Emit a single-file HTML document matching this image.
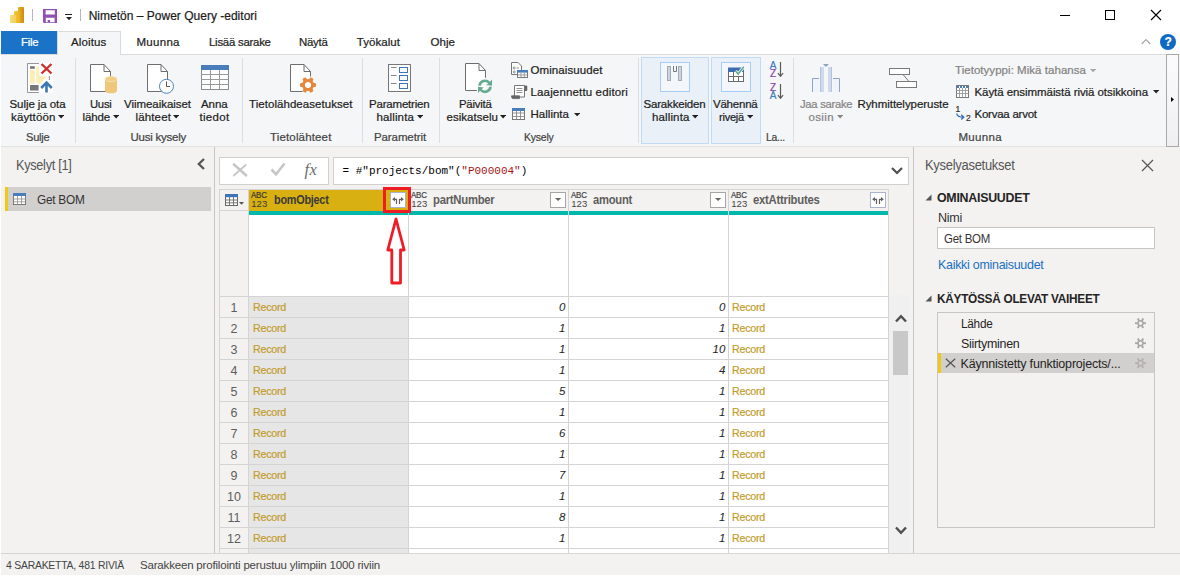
<!DOCTYPE html>
<html lang="fi"><head><meta charset="utf-8"><title>Power Query -editori</title>
<style>
html,body{margin:0;padding:0;}
body{width:1180px;height:576px;position:relative;overflow:hidden;background:#fff;font-family:"Liberation Sans",sans-serif;}
.a{position:absolute;box-sizing:border-box;display:block;}
.t{position:absolute;white-space:nowrap;}
.h{-webkit-text-stroke:0.22px currentColor;}
</style></head><body>
<div class="a" style="left:1px;top:31px;width:56px;height:23px;background:#1a73c7;"></div>
<div class="a" style="left:0px;top:54px;width:1180px;height:1px;background:#dadbdc;"></div>
<div class="a" style="left:57px;top:31px;width:64px;height:24px;background:#f5f6f7;border:1px solid #dadbdc;border-bottom:none;"></div>
<div class="a" style="left:0px;top:55px;width:1180px;height:91px;background:#f5f6f7;"></div>
<div class="a" style="left:0px;top:146px;width:1180px;height:1px;background:#e1e1e1;"></div>
<div class="a" style="left:0px;top:147px;width:1180px;height:406px;background:#f3f2f1;"></div>
<div class="a" style="left:0px;top:553px;width:1180px;height:1px;background:#d6d6d6;"></div>
<div class="a" style="left:0px;top:554px;width:1180px;height:21px;background:#f3f2f1;"></div>
<div class="a" style="left:0px;top:31px;width:1px;height:545px;background:#fff;"></div>
<div class="a" style="left:0px;top:575px;width:1180px;height:1px;background:#fff;"></div>
<svg class="a" style="left:10px;top:7px" width="14" height="16" viewBox="0 0 14 16"><defs><linearGradient id="g1" x1="0" x2="1"><stop offset="0" stop-color="#f7df7c"/><stop offset="1" stop-color="#f3cf58"/></linearGradient>
<linearGradient id="g2" x1="0" x2="1"><stop offset="0" stop-color="#f3c93c"/><stop offset="1" stop-color="#eab022"/></linearGradient>
<linearGradient id="g3" x1="0" x2="1"><stop offset="0" stop-color="#eab424"/><stop offset="1" stop-color="#cf8a0e"/></linearGradient></defs>
<rect x="8" y="0" width="6" height="16" rx="0.7" fill="url(#g3)"/>
<rect x="4" y="4" width="6" height="12" rx="0.7" fill="url(#g2)"/>
<rect x="0" y="8" width="6" height="8" rx="0.7" fill="url(#g1)"/></svg>
<div class="a" style="left:32px;top:9px;width:1px;height:12px;background:#b5b5b5;"></div>
<svg class="a" style="left:43px;top:9px" width="14" height="14" viewBox="0 0 14 14"><path d="M0 0H14V14H1L0 13Z M2.6 1.3V5.5H11.8V1.3Z M2.8 8.7V13.2H11.6V8.7Z" fill="#9350b3" fill-rule="evenodd"/><rect x="4.7" y="11" width="2.4" height="2.4" fill="#9350b3"/></svg>
<div class="a" style="left:65px;top:14px;width:7px;height:1px;background:#222;"></div>
<svg class="a" style="left:65.7px;top:16.8px" width="6.0" height="3.1999999999999993" viewBox="0 0 6.0 3.1999999999999993"><path d="M0 0H6.0L3.0 3.1999999999999993Z" fill="#222"/></svg>
<div class="a" style="left:80px;top:9px;width:1px;height:12px;background:#b5b5b5;"></div>
<span class="t h" style="top:7.64px;font-size:12px;line-height:16px;color:#1b1b1b;letter-spacing:0.008px;left:88.70px;">Nimetön – Power Query -editori</span>
<div class="a" style="left:1060px;top:15px;width:10px;height:1px;background:#000;"></div>
<div class="a" style="left:1105px;top:10px;width:10px;height:10px;border:1px solid #000;"></div>
<svg class="a" style="left:1150px;top:9px" width="12" height="12" viewBox="0 0 12 12"><path d="M1 1L11 11M11 1L1 11" stroke="#000" stroke-width="1.1" fill="none"/></svg>
<svg class="a" style="left:1141px;top:38px" width="10" height="7" viewBox="0 0 10 7"><path d="M0.7 6L5 1.7L9.3 6" stroke="#a6a6a6" stroke-width="1.2" fill="none"/></svg>
<div class="a" style="left:1160px;top:34px;width:16px;height:16px;background:#1169c4;border-radius:8px;"></div>
<span class="t h" style="top:34.44px;font-size:12px;line-height:16px;color:#fff;font-weight:700;left:1164.50px;">?</span>
<span class="t h" style="top:35.42px;font-size:11.5px;line-height:15px;color:#fff;letter-spacing:-0.253px;transform:scaleX(0.9875);transform-origin:0 50%;left:20.60px;">File</span>
<span class="t h" style="top:35.42px;font-size:11.5px;line-height:15px;color:#1e1e1e;letter-spacing:0.140px;left:71.00px;">Aloitus</span>
<span class="t h" style="top:35.42px;font-size:11.5px;line-height:15px;color:#1e1e1e;letter-spacing:0.290px;left:136.50px;">Muunna</span>
<span class="t h" style="top:35.42px;font-size:11.5px;line-height:15px;color:#1e1e1e;letter-spacing:-0.253px;transform:scaleX(0.9925);transform-origin:0 50%;left:209.00px;">Lisää sarake</span>
<span class="t h" style="top:35.42px;font-size:11.5px;line-height:15px;color:#1e1e1e;letter-spacing:-0.253px;transform:scaleX(0.9939);transform-origin:0 50%;left:299.40px;">Näytä</span>
<span class="t h" style="top:35.42px;font-size:11.5px;line-height:15px;color:#1e1e1e;letter-spacing:0.059px;left:356.70px;">Työkalut</span>
<span class="t h" style="top:35.42px;font-size:11.5px;line-height:15px;color:#1e1e1e;letter-spacing:0.052px;left:430.50px;">Ohje</span>
<div class="a" style="left:75px;top:58px;width:1px;height:85px;background:#dddedf;"></div>
<div class="a" style="left:242px;top:58px;width:1px;height:85px;background:#dddedf;"></div>
<div class="a" style="left:362px;top:58px;width:1px;height:85px;background:#dddedf;"></div>
<div class="a" style="left:439px;top:58px;width:1px;height:85px;background:#dddedf;"></div>
<div class="a" style="left:638px;top:58px;width:1px;height:85px;background:#dddedf;"></div>
<div class="a" style="left:793px;top:58px;width:1px;height:85px;background:#dddedf;"></div>
<div class="a" style="left:641px;top:57px;width:68px;height:87px;background:#e9f0f8;border:1px solid #c2dbf5;"></div>
<div class="a" style="left:660px;top:62px;width:30px;height:30px;background:#f3f7fb;border:1px solid #a8cdf5;"></div>
<div class="a" style="left:711px;top:57px;width:50px;height:87px;background:#e9f0f8;border:1px solid #c2dbf5;"></div>
<div class="a" style="left:721px;top:62px;width:30px;height:30px;background:#f3f7fb;border:1px solid #a8cdf5;"></div>
<div class="a" style="left:1166px;top:54px;width:13px;height:93px;background:linear-gradient(#fbfbfb,#efefef);border:1px solid #a9a9a9;"></div>
<svg class="a" style="left:1171px;top:97px" width="3" height="5" viewBox="0 0 3 5"><path d="M0 0L3 2.5L0 5Z" fill="#000"/></svg>
<span class="t h" style="top:97.12px;font-size:11.5px;line-height:15px;color:#1e1e1e;letter-spacing:-0.075px;left:9.50px;">Sulje ja ota</span>
<span class="t h" style="top:109.72px;font-size:11.5px;line-height:15px;color:#1e1e1e;letter-spacing:0.128px;left:11.00px;">käyttöön</span>
<svg class="a" style="left:58.2px;top:115.2px" width="6.299999999999997" height="3.3999999999999915" viewBox="0 0 6.299999999999997 3.3999999999999915"><path d="M0 0H6.299999999999997L3.1499999999999986 3.3999999999999915Z" fill="#1e1e1e"/></svg>
<span class="t h" style="top:97.12px;font-size:11.5px;line-height:15px;color:#1e1e1e;letter-spacing:-0.253px;transform:scaleX(0.9776);transform-origin:0 50%;left:89.50px;">Uusi</span>
<span class="t h" style="top:109.72px;font-size:11.5px;line-height:15px;color:#1e1e1e;letter-spacing:-0.128px;left:82.50px;">lähde</span>
<svg class="a" style="left:113.2px;top:115.2px" width="6.299999999999997" height="3.3999999999999915" viewBox="0 0 6.299999999999997 3.3999999999999915"><path d="M0 0H6.299999999999997L3.1499999999999986 3.3999999999999915Z" fill="#1e1e1e"/></svg>
<span class="t h" style="top:97.12px;font-size:11.5px;line-height:15px;color:#1e1e1e;letter-spacing:-0.042px;left:124.00px;">Viimeaikaiset</span>
<span class="t h" style="top:109.72px;font-size:11.5px;line-height:15px;color:#1e1e1e;letter-spacing:0.139px;left:135.50px;">lähteet</span>
<svg class="a" style="left:173.2px;top:115.2px" width="6.300000000000011" height="3.3999999999999915" viewBox="0 0 6.300000000000011 3.3999999999999915"><path d="M0 0H6.300000000000011L3.1500000000000057 3.3999999999999915Z" fill="#1e1e1e"/></svg>
<span class="t h" style="top:97.12px;font-size:11.5px;line-height:15px;color:#1e1e1e;letter-spacing:-0.089px;left:201.00px;">Anna</span>
<span class="t h" style="top:109.72px;font-size:11.5px;line-height:15px;color:#1e1e1e;letter-spacing:0.311px;left:199.50px;">tiedot</span>
<span class="t h" style="top:97.12px;font-size:11.5px;line-height:15px;color:#1e1e1e;letter-spacing:0.053px;left:249.00px;">Tietolähdeasetukset</span>
<span class="t h" style="top:97.12px;font-size:11.5px;line-height:15px;color:#1e1e1e;letter-spacing:-0.194px;left:369.00px;">Parametrien</span>
<span class="t h" style="top:109.72px;font-size:11.5px;line-height:15px;color:#1e1e1e;letter-spacing:0.132px;left:376.50px;">hallinta</span>
<svg class="a" style="left:417.2px;top:115.2px" width="6.300000000000011" height="3.3999999999999915" viewBox="0 0 6.300000000000011 3.3999999999999915"><path d="M0 0H6.300000000000011L3.1500000000000057 3.3999999999999915Z" fill="#1e1e1e"/></svg>
<span class="t h" style="top:97.12px;font-size:11.5px;line-height:15px;color:#1e1e1e;letter-spacing:-0.253px;transform:scaleX(0.9925);transform-origin:0 50%;left:459.00px;">Päivitä</span>
<span class="t h" style="top:109.72px;font-size:11.5px;line-height:15px;color:#1e1e1e;letter-spacing:0.036px;left:446.50px;">esikatselu</span>
<svg class="a" style="left:499.7px;top:115.2px" width="6.300000000000011" height="3.3999999999999915" viewBox="0 0 6.300000000000011 3.3999999999999915"><path d="M0 0H6.300000000000011L3.1500000000000057 3.3999999999999915Z" fill="#1e1e1e"/></svg>
<span class="t h" style="top:97.12px;font-size:11.5px;line-height:15px;color:#1e1e1e;letter-spacing:-0.175px;left:643.50px;">Sarakkeiden</span>
<span class="t h" style="top:109.72px;font-size:11.5px;line-height:15px;color:#1e1e1e;letter-spacing:0.132px;left:652.00px;">hallinta</span>
<svg class="a" style="left:692.2px;top:115.2px" width="6.2999999999999545" height="3.3999999999999915" viewBox="0 0 6.2999999999999545 3.3999999999999915"><path d="M0 0H6.2999999999999545L3.1499999999999773 3.3999999999999915Z" fill="#1e1e1e"/></svg>
<span class="t h" style="top:97.12px;font-size:11.5px;line-height:15px;color:#1e1e1e;letter-spacing:-0.221px;left:713.00px;">Vähennä</span>
<span class="t h" style="top:109.72px;font-size:11.5px;line-height:15px;color:#1e1e1e;letter-spacing:-0.253px;transform:scaleX(0.9629);transform-origin:0 50%;left:719.00px;">rivejä</span>
<svg class="a" style="left:747.2px;top:115.2px" width="6.2999999999999545" height="3.3999999999999915" viewBox="0 0 6.2999999999999545 3.3999999999999915"><path d="M0 0H6.2999999999999545L3.1499999999999773 3.3999999999999915Z" fill="#1e1e1e"/></svg>
<span class="t h" style="top:97.12px;font-size:11.5px;line-height:15px;color:#858585;letter-spacing:-0.253px;transform:scaleX(0.9735);transform-origin:0 50%;left:799.70px;">Jaa sarake</span>
<span class="t h" style="top:109.72px;font-size:11.5px;line-height:15px;color:#858585;letter-spacing:0.370px;left:808.40px;">osiin</span>
<svg class="a" style="left:836.7px;top:115.2px" width="6.2999999999999545" height="3.3999999999999915" viewBox="0 0 6.2999999999999545 3.3999999999999915"><path d="M0 0H6.2999999999999545L3.1499999999999773 3.3999999999999915Z" fill="#858585"/></svg>
<span class="t h" style="top:97.12px;font-size:11.5px;line-height:15px;color:#1e1e1e;letter-spacing:-0.049px;left:857.40px;">Ryhmittelyperuste</span>
<span class="t h" style="top:130.22px;font-size:11.5px;line-height:15px;color:#444;letter-spacing:-0.253px;transform:scaleX(0.9668);transform-origin:0 50%;left:26.00px;">Sulje</span>
<span class="t h" style="top:130.22px;font-size:11.5px;line-height:15px;color:#444;letter-spacing:-0.241px;left:130.50px;">Uusi kysely</span>
<span class="t h" style="top:130.22px;font-size:11.5px;line-height:15px;color:#444;letter-spacing:0.153px;left:270.00px;">Tietolähteet</span>
<span class="t h" style="top:130.22px;font-size:11.5px;line-height:15px;color:#444;letter-spacing:-0.104px;left:374.00px;">Parametrit</span>
<span class="t h" style="top:130.22px;font-size:11.5px;line-height:15px;color:#444;letter-spacing:-0.253px;transform:scaleX(0.9118);transform-origin:0 50%;left:523.50px;">Kysely</span>
<span class="t h" style="top:130.22px;font-size:11.5px;line-height:15px;color:#444;letter-spacing:-0.253px;transform:scaleX(0.9000);transform-origin:0 50%;left:766.00px;">La...</span>
<span class="t h" style="top:130.22px;font-size:11.5px;line-height:15px;color:#444;letter-spacing:0.340px;left:958.40px;">Muunna</span>
<span class="t h" style="top:62.72px;font-size:11.5px;line-height:15px;color:#1e1e1e;letter-spacing:0.087px;left:530.50px;">Ominaisuudet</span>
<span class="t h" style="top:84.72px;font-size:11.5px;line-height:15px;color:#1e1e1e;letter-spacing:0.151px;left:530.50px;">Laajennettu editori</span>
<span class="t h" style="top:106.72px;font-size:11.5px;line-height:15px;color:#1e1e1e;letter-spacing:0.018px;left:530.50px;">Hallinta</span>
<svg class="a" style="left:573.8px;top:113px" width="6.2000000000000455" height="3.4000000000000057" viewBox="0 0 6.2000000000000455 3.4000000000000057"><path d="M0 0H6.2000000000000455L3.1000000000000227 3.4000000000000057Z" fill="#252423"/></svg>
<span class="t h" style="top:62.72px;font-size:11.5px;line-height:15px;color:#838383;letter-spacing:0.041px;left:955.00px;">Tietotyyppi: Mikä tahansa</span>
<svg class="a" style="left:1089.8px;top:68.8px" width="6.2000000000000455" height="3.4000000000000057" viewBox="0 0 6.2000000000000455 3.4000000000000057"><path d="M0 0H6.2000000000000455L3.1000000000000227 3.4000000000000057Z" fill="#a8a8a8"/></svg>
<span class="t h" style="top:84.72px;font-size:11.5px;line-height:15px;color:#1e1e1e;letter-spacing:-0.067px;left:974.50px;">Käytä ensimmäistä riviä otsikkoina</span>
<svg class="a" style="left:1152.5px;top:90.2px" width="6.2999999999999545" height="3.3999999999999915" viewBox="0 0 6.2999999999999545 3.3999999999999915"><path d="M0 0H6.2999999999999545L3.1499999999999773 3.3999999999999915Z" fill="#252423"/></svg>
<span class="t h" style="top:106.82px;font-size:11.5px;line-height:15px;color:#1e1e1e;letter-spacing:-0.242px;left:974.50px;">Korvaa arvot</span>
<svg class="a" style="left:27px;top:63px" width="26" height="30" viewBox="0 0 26 30"><path d="M19 0.5H0.5V29.5H12" fill="#fff" stroke="#8a8a8a"/>
<rect x="0.5" y="0.5" width="12" height="29" fill="#fff" stroke="none"/>
<path d="M12 0.5H0.5V29.5H12" fill="none" stroke="#989898"/>
<rect x="12" y="0" width="14" height="30" fill="#fff"/>
<rect x="3" y="3.2" width="4.8" height="2.6" fill="#777"/>
<rect x="3" y="7" width="4.7" height="13.5" fill="#fdeeb5"/>
<path d="M9.3 3.2H12V11.5L14 13.5H20L13.5 20.5H9.3Z" fill="#fdeeb5"/>
<rect x="3" y="22" width="8.6" height="5.5" fill="#777"/>
<path d="M14.5 1L24.5 10.5M24.5 1L14.5 10.5" stroke="#c9302c" stroke-width="2.4" fill="none"/>
<path d="M22.3 13V17" stroke="#8a8a8a" stroke-width="1"/>
<path d="M19.5 29.5V20.5M14.2 25L19.5 19.7L24.8 25" stroke="#3b78b5" stroke-width="2.6" fill="none"/></svg>
<svg class="a" style="left:90px;top:64px" width="28" height="30" viewBox="0 0 28 30"><path d="M0.5 0.5H14L20.5 7.5V27.5H0.5Z" fill="#fff" stroke="#6e6e6e" stroke-width="1"/><path d="M14 0.5V7.5H20.5" fill="none" stroke="#6e6e6e" stroke-width="1"/><path d="M15 15V26.5C15 30.3 27 30.3 27 26.5V15Z" fill="#eec77a"/>
<ellipse cx="21" cy="15" rx="6" ry="2.6" fill="#f0cd85" stroke="#f7e3b8" stroke-width="0.8"/></svg>
<svg class="a" style="left:147px;top:64px" width="28" height="30" viewBox="0 0 28 30"><path d="M0.5 0.5H14L20.5 7.5V27.5H0.5Z" fill="#fff" stroke="#6e6e6e" stroke-width="1"/><path d="M14 0.5V7.5H20.5" fill="none" stroke="#6e6e6e" stroke-width="1"/><circle cx="19.5" cy="22.3" r="7" fill="#fff" stroke="#4a86c5" stroke-width="1"/>
<path d="M19.5 17.5V22.5H23" fill="none" stroke="#555" stroke-width="1"/></svg>
<svg class="a" style="left:201px;top:65px" width="28" height="25" viewBox="0 0 28 25"><rect x="0.5" y="0.5" width="27" height="24" fill="#fff" stroke="#8c8c8c"/>
<rect x="0" y="0" width="28" height="5" fill="#4a7ebb"/>
<path d="M9.5 5V24M18.5 5V24M0 9.5H28M0 14.5H28M0 19.5H28" stroke="#9a9a9a" stroke-width="1" fill="none"/></svg>
<svg class="a" style="left:290px;top:64px" width="28" height="30" viewBox="0 0 28 30"><path d="M0.5 0.5H14L20.5 7.5V27.5H0.5Z" fill="#fff"/><path d="M12.5 27.5H0.5V0.5H14L20.5 7.5V12.5M14 0.5V7.5H20.5" fill="none" stroke="#6e6e6e"/><g transform="translate(18,21)"><g fill="#e8873a"><rect x="-1.9" y="-8" width="3.8" height="5" rx="0.8" transform="rotate(30)"/><rect x="-1.9" y="-8" width="3.8" height="5" rx="0.8" transform="rotate(90)"/><rect x="-1.9" y="-8" width="3.8" height="5" rx="0.8" transform="rotate(150)"/><rect x="-1.9" y="-8" width="3.8" height="5" rx="0.8" transform="rotate(210)"/><rect x="-1.9" y="-8" width="3.8" height="5" rx="0.8" transform="rotate(270)"/><rect x="-1.9" y="-8" width="3.8" height="5" rx="0.8" transform="rotate(330)"/></g><circle r="4.6" fill="none" stroke="#e8873a" stroke-width="3"/><circle r="2.6" fill="#fff"/></g></svg>
<svg class="a" style="left:388px;top:64px" width="23" height="28" viewBox="0 0 23 28"><rect x="0.5" y="0.5" width="22" height="27" fill="#fff" stroke="#777"/>
<path d="M3 3.5H8.5M3 11.5H8.5M3 19.5H8.5" stroke="#8a8a8a" stroke-width="1"/>
<rect x="11.5" y="3.5" width="8" height="5" fill="#fff" stroke="#3b78b5"/>
<rect x="11.5" y="11.5" width="8" height="5" fill="#fff" stroke="#3b78b5"/>
<rect x="11.5" y="19.5" width="8" height="5" fill="#fff" stroke="#3b78b5"/></svg>
<svg class="a" style="left:465px;top:63px" width="29" height="31" viewBox="0 0 29 31"><path d="M0.5 0.5H14L20.5 7.5V27.5H0.5Z" fill="#fff"/><path d="M11.8 27.5H0.5V0.5H14L20.5 7.5V14.8M14 0.5V7.5H20.5" fill="none" stroke="#6e6e6e"/>
<path id="rf" d="M13.2 22.8A6.8 6.8 0 0 1 25.05 18.75L27 16.5V22.8L21 22L23.31 20.71A4.2 4.2 0 0 0 15.83 22.8Z" fill="#66a98f"/>
<use href="#rf" transform="rotate(180 20 23.3)"/></svg>
<svg class="a" style="left:511px;top:62px" width="17" height="16" viewBox="0 0 17 16"><path d="M0.5 0.5H7L10.5 4V12.5H0.5Z" fill="#fff" stroke="#777"/>
<circle cx="3.2" cy="6" r="1" fill="none" stroke="#777" stroke-width="0.8"/><circle cx="3.2" cy="10" r="1" fill="none" stroke="#777" stroke-width="0.8"/>
<path d="M5.5 6H8" stroke="#777" stroke-width="0.8"/>
<rect x="6.5" y="8.5" width="10" height="7" fill="#fff" stroke="#777"/>
<rect x="6" y="8" width="11" height="2.6" fill="#4a7ebb"/>
<path d="M10 10.5V15.5M13.3 10.5V15.5M6.5 13H16.5" stroke="#888" stroke-width="0.8"/></svg>
<svg class="a" style="left:511px;top:85px" width="17" height="15" viewBox="0 0 17 15"><path d="M3.5 0.5H13.5V12H3.5Z" fill="#fff" stroke="#777"/>
<path d="M13.5 1H15.8V5.5H13.5" fill="#666" stroke="#555" stroke-width="0.8"/>
<path d="M5.5 3.5H11.5M5.5 5.5H11.5M5.5 7.5H11.5" stroke="#888" stroke-width="0.9"/>
<path d="M0.5 10.8H8.5V13.6H2C1 13.6 0.5 12.7 0.5 10.8Z" fill="#666" stroke="#666" stroke-width="0.8"/></svg>
<svg class="a" style="left:512px;top:108px" width="13" height="12" viewBox="0 0 13 12"><rect x="0.5" y="0.5" width="12" height="11" fill="#fff" stroke="#777"/>
<rect x="0" y="0" width="13" height="3" fill="#4a7ebb"/>
<path d="M4.5 3V11.5M8.5 3V11.5M0.5 5H12.5M0.5 8.5H12.5" stroke="#888" stroke-width="0.9"/></svg>
<svg class="a" style="left:667px;top:66px" width="16" height="15" viewBox="0 0 16 15"><rect x="0.5" y="0.5" width="3" height="14" fill="#c5d6ea" stroke="#a9a9a9"/>
<rect x="11.5" y="0.5" width="3" height="14" fill="#c5d6ea" stroke="#a9a9a9"/>
<path d="M6.5 0V5.5H9.5V0" fill="none" stroke="#777" stroke-width="1"/></svg>
<svg class="a" style="left:728px;top:66px" width="17" height="16" viewBox="0 0 17 16"><rect x="0.5" y="5.5" width="15" height="10" fill="#fff" stroke="#6a6a6a"/>
<rect x="0" y="1.5" width="16" height="4.5" fill="#3d6db0"/>
<path d="M5.5 6V15.5M10.5 6V15.5M0.5 10.5H15.5" stroke="#6a6a6a" stroke-width="1"/>
<path d="M7.5 5L10.2 8L15.8 0.8" fill="none" stroke="#fff" stroke-width="3"/>
<path d="M7.5 5L10.2 8L15.8 0.8" fill="none" stroke="#5fa88a" stroke-width="1.5"/></svg>
<span class="t h" style="top:58.83px;font-size:10px;line-height:13px;color:#3f7cc0;left:769.70px;">A</span>
<span class="t h" style="top:67.03px;font-size:10px;line-height:13px;color:#8a45aa;left:770.00px;">Z</span>
<svg class="a" style="left:777px;top:62px" width="7" height="15" viewBox="0 0 7 15"><path d="M3.5 0V14.3M0.9 11.2L3.5 14.3L6.1 11.2" fill="none" stroke="#5a5a5a" stroke-width="1.2"/></svg>
<span class="t h" style="top:80.94px;font-size:10px;line-height:13px;color:#8a45aa;left:770.00px;">Z</span>
<span class="t h" style="top:88.94px;font-size:10px;line-height:13px;color:#3f7cc0;left:769.70px;">A</span>
<svg class="a" style="left:777px;top:84px" width="7" height="15" viewBox="0 0 7 15"><path d="M3.5 0V14.3M0.9 11.2L3.5 14.3L6.1 11.2" fill="none" stroke="#5a5a5a" stroke-width="1.2"/></svg>
<svg class="a" style="left:812px;top:64px" width="28" height="28" viewBox="0 0 28 28"><path d="M10.9 0.1H17L13.95 2.9Z" fill="#8fa3c0"/>
<rect x="8" y="3" width="4" height="25" fill="#cfdbec"/><path d="M8.5 3V28" stroke="#b3c3db"/>
<rect x="16" y="3" width="4" height="25" fill="#cfdbec"/><path d="M19.5 3V28" stroke="#b3c3db"/>
<rect x="0" y="14" width="7" height="14" fill="#eef3fc"/><path d="M0.5 28V14.5H7" fill="none" stroke="#8fa4c4"/>
<rect x="21" y="14" width="7" height="14" fill="#eef3fc"/><path d="M21 14.5H27.5V28" fill="none" stroke="#8fa4c4"/></svg>
<svg class="a" style="left:889px;top:68px" width="29" height="20" viewBox="0 0 29 20"><rect x="0.5" y="0.5" width="20" height="6" fill="#fff" stroke="#7a7a7a"/>
<rect x="7.5" y="13.5" width="20" height="6" fill="#fff" stroke="#7a7a7a"/>
<path d="M14 6.5L20 13.5" stroke="#7a7a7a" stroke-width="1"/></svg>
<svg class="a" style="left:956px;top:85px" width="13" height="13" viewBox="0 0 13 13"><rect x="0.5" y="0.5" width="12" height="12" fill="#fff" stroke="#777"/>
<path d="M1 2H12" stroke="#4a7ebb" stroke-width="2" stroke-dasharray="2 1"/>
<path d="M3.5 3V12.5M6.5 3V12.5M9.5 3V12.5M0.5 5.5H12.5M0.5 8.5H12.5" stroke="#999" stroke-width="0.9"/></svg>
<span class="t h" style="top:104.35px;font-size:8.5px;line-height:11px;color:#333;left:955.50px;">1</span>
<span class="t h" style="top:113.15px;font-size:8.5px;line-height:11px;color:#333;left:966.00px;">2</span>
<svg class="a" style="left:956px;top:113px" width="9" height="7" viewBox="0 0 9 7"><path d="M0.7 0.5C1 3.5 3.5 4.2 7.5 4.2M5.2 1.8L7.8 4.2L5.2 6.5" fill="none" stroke="#2f6fbf" stroke-width="1.3"/></svg>
<div class="a" style="left:214px;top:147px;width:1px;height:406px;background:#c8c6c4;"></div>
<span class="t" style="top:156.35px;font-size:14px;line-height:18px;color:#555;letter-spacing:-0.308px;transform:scaleX(0.9070);transform-origin:0 50%;left:16.00px;">Kyselyt [1]</span>
<svg class="a" style="left:197.3px;top:158.3px" width="8" height="12" viewBox="0 0 8 12"><path d="M7 1L1.8 6L7 11" fill="none" stroke="#555" stroke-width="2.3"/></svg>
<div class="a" style="left:5px;top:187px;width:206px;height:24px;background:#d2d0ce;"></div>
<div class="a" style="left:5px;top:187px;width:2.5px;height:24px;background:#f2c811;"></div>
<svg class="a" style="left:13px;top:193px" width="13" height="12" viewBox="0 0 13 12"><rect x="0.5" y="0.5" width="12" height="11" fill="#fff" stroke="#777"/>
<rect x="0" y="0" width="13" height="3" fill="#4a7ebb"/>
<path d="M4.5 3V11.5M8.5 3V11.5M0.5 6H12.5M0.5 8.8H12.5" stroke="#999" stroke-width="0.9"/></svg>
<span class="t" style="top:191.00px;font-size:13px;line-height:17px;color:#333;letter-spacing:-0.286px;transform:scaleX(0.9104);transform-origin:0 50%;left:36.50px;">Get BOM</span>
<div class="a" style="left:219px;top:157px;width:110px;height:28px;background:#fff;border:1px solid #d2d0ce;"></div>
<div class="a" style="left:333px;top:157px;width:576px;height:28px;background:#fff;border:1px solid #d2d0ce;"></div>
<svg class="a" style="left:232px;top:163px" width="16" height="14" viewBox="0 0 16 14"><path d="M1.2 0.8L14.8 13" stroke="#c6c6c6" stroke-width="2.6" fill="none"/><path d="M14.2 1.5L1.2 13" stroke="#c6c6c6" stroke-width="1.7" fill="none"/></svg>
<svg class="a" style="left:270px;top:162px" width="16" height="14" viewBox="0 0 16 14"><path d="M1.5 7.5L6 12.3L14.5 1.5" stroke="#c6c6c6" stroke-width="2.6" fill="none"/></svg>
<span class="t" style="top:159.38px;font-size:16.5px;line-height:21px;color:#6a6a6a;font-style:italic;font-family:'Liberation Serif', serif;letter-spacing:0.296px;left:304.50px;">fx</span>
<span class="t" style="top:164.19px;font-size:11px;line-height:14px;color:#000;font-family:'Liberation Mono', monospace;letter-spacing:-0.001px;left:342.50px;">= #&quot;projects/bom&quot;(<span style="color:#a31515">&quot;P000004&quot;</span>)</span>
<svg class="a" style="left:891px;top:167px" width="12" height="8" viewBox="0 0 12 8"><path d="M1 1L6 6L11 1" fill="none" stroke="#4f4f4f" stroke-width="2.2"/></svg>
<div class="a" style="left:219px;top:189px;width:670px;height:364px;background:#fff;"></div>
<div class="a" style="left:219px;top:189px;width:30px;height:364px;background:#f3f2f1;"></div>
<div class="a" style="left:219px;top:189px;width:670px;height:22px;background:#f3f2f1;"></div>
<div class="a" style="left:249px;top:190px;width:160px;height:21px;background:#d8b012;"></div>
<div class="a" style="left:249px;top:296px;width:160px;height:257px;background:#e6e6e6;"></div>
<div class="a" style="left:249px;top:211px;width:640px;height:4px;background:#01b8aa;"></div>
<div class="a" style="left:219px;top:189px;width:670px;height:1px;background:#d4d4d4;"></div>
<div class="a" style="left:219px;top:189px;width:1px;height:364px;background:#d4d4d4;"></div>
<div class="a" style="left:248px;top:189px;width:1px;height:364px;background:#d4d4d4;"></div>
<div class="a" style="left:408px;top:189px;width:1px;height:364px;background:#d4d4d4;"></div>
<div class="a" style="left:568px;top:189px;width:1px;height:364px;background:#d4d4d4;"></div>
<div class="a" style="left:728px;top:189px;width:1px;height:364px;background:#d4d4d4;"></div>
<div class="a" style="left:888px;top:189px;width:1px;height:364px;background:#d4d4d4;"></div>
<div class="a" style="left:219px;top:210px;width:30px;height:1px;background:#d4d4d4;"></div>
<div class="a" style="left:219px;top:296px;width:670px;height:1px;background:#d4d4d4;"></div>
<div class="a" style="left:219px;top:317px;width:670px;height:1px;background:#d4d4d4;"></div>
<div class="a" style="left:219px;top:338px;width:670px;height:1px;background:#d4d4d4;"></div>
<div class="a" style="left:219px;top:359px;width:670px;height:1px;background:#d4d4d4;"></div>
<div class="a" style="left:219px;top:380px;width:670px;height:1px;background:#d4d4d4;"></div>
<div class="a" style="left:219px;top:401px;width:670px;height:1px;background:#d4d4d4;"></div>
<div class="a" style="left:219px;top:422px;width:670px;height:1px;background:#d4d4d4;"></div>
<div class="a" style="left:219px;top:443px;width:670px;height:1px;background:#d4d4d4;"></div>
<div class="a" style="left:219px;top:464px;width:670px;height:1px;background:#d4d4d4;"></div>
<div class="a" style="left:219px;top:485px;width:670px;height:1px;background:#d4d4d4;"></div>
<div class="a" style="left:219px;top:506px;width:670px;height:1px;background:#d4d4d4;"></div>
<div class="a" style="left:219px;top:527px;width:670px;height:1px;background:#d4d4d4;"></div>
<div class="a" style="left:219px;top:548px;width:670px;height:1px;background:#d4d4d4;"></div>
<svg class="a" style="left:225px;top:194px" width="13" height="12" viewBox="0 0 13 12"><rect x="0.5" y="0.5" width="12" height="11" fill="#fff" stroke="#666"/>
<rect x="0" y="0" width="13" height="3.2" fill="#3f74b8"/>
<path d="M4.5 3V11.5M8.5 3V11.5M0.5 6H12.5M0.5 8.8H12.5" stroke="#777" stroke-width="1"/></svg>
<svg class="a" style="left:239px;top:202px" width="5" height="2.8000000000000114" viewBox="0 0 5 2.8000000000000114"><path d="M0 0H5L2.5 2.8000000000000114Z" fill="#555"/></svg>
<span class="t h" style="top:189.95px;font-size:8.5px;line-height:11px;color:#3b3a39;letter-spacing:-0.187px;transform:scaleX(0.9340);transform-origin:0 50%;left:251.20px;">ABC</span>
<span class="t" style="top:197.61px;font-size:9.5px;line-height:12px;color:#3b3a39;letter-spacing:0.083px;left:251.20px;">123</span>
<span class="t" style="top:192.14px;font-size:12px;line-height:16px;color:#3b3a39;font-weight:700;letter-spacing:-0.264px;transform:scaleX(0.9039);transform-origin:0 50%;left:273.50px;">bomObject</span>
<div class="a" style="left:390px;top:192px;width:16px;height:16px;background:#fff;border:1px solid #aab4cc;"></div>
<svg class="a" style="left:391px;top:196px" width="14" height="9" viewBox="0 0 14 9"><path d="M5.5 8V3.3H3M8.5 8V3.3H11" fill="none" stroke="#5f5f5f" stroke-width="1.2"/><path d="M1.2 3.3L4 1V5.6ZM12.8 3.3L10 1V5.6Z" fill="#5f5f5f"/></svg>
<span class="t h" style="top:189.95px;font-size:8.5px;line-height:11px;color:#444;letter-spacing:-0.187px;transform:scaleX(0.9340);transform-origin:0 50%;left:411.20px;">ABC</span>
<span class="t" style="top:197.61px;font-size:9.5px;line-height:12px;color:#444;letter-spacing:0.083px;left:411.20px;">123</span>
<span class="t" style="top:192.14px;font-size:12px;line-height:16px;color:#605e5c;font-weight:700;letter-spacing:-0.264px;transform:scaleX(0.9408);transform-origin:0 50%;left:433.00px;">partNumber</span>
<div class="a" style="left:550px;top:192px;width:16px;height:16px;background:#fff;border:1px solid #a6a6a6;"></div>
<svg class="a" style="left:554.8px;top:198px" width="6.2000000000000455" height="3" viewBox="0 0 6.2000000000000455 3"><path d="M0 0H6.2000000000000455L3.1000000000000227 3Z" fill="#666"/></svg>
<span class="t h" style="top:189.95px;font-size:8.5px;line-height:11px;color:#444;letter-spacing:-0.187px;transform:scaleX(0.9340);transform-origin:0 50%;left:571.20px;">ABC</span>
<span class="t" style="top:197.61px;font-size:9.5px;line-height:12px;color:#444;letter-spacing:0.083px;left:571.20px;">123</span>
<span class="t" style="top:192.14px;font-size:12px;line-height:16px;color:#605e5c;font-weight:700;letter-spacing:-0.264px;transform:scaleX(0.9342);transform-origin:0 50%;left:593.00px;">amount</span>
<div class="a" style="left:710px;top:192px;width:16px;height:16px;background:#fff;border:1px solid #a6a6a6;"></div>
<svg class="a" style="left:714.8px;top:198px" width="6.2000000000000455" height="3" viewBox="0 0 6.2000000000000455 3"><path d="M0 0H6.2000000000000455L3.1000000000000227 3Z" fill="#666"/></svg>
<span class="t h" style="top:189.95px;font-size:8.5px;line-height:11px;color:#444;letter-spacing:-0.187px;transform:scaleX(0.9340);transform-origin:0 50%;left:731.20px;">ABC</span>
<span class="t" style="top:197.61px;font-size:9.5px;line-height:12px;color:#444;letter-spacing:0.083px;left:731.20px;">123</span>
<span class="t" style="top:192.14px;font-size:12px;line-height:16px;color:#605e5c;font-weight:700;letter-spacing:-0.264px;transform:scaleX(0.9422);transform-origin:0 50%;left:753.00px;">extAttributes</span>
<div class="a" style="left:870px;top:192px;width:16px;height:16px;background:#fff;border:1px solid #aab4cc;"></div>
<svg class="a" style="left:871px;top:196px" width="14" height="9" viewBox="0 0 14 9"><path d="M5.5 8V3.3H3M8.5 8V3.3H11" fill="none" stroke="#5f5f5f" stroke-width="1.2"/><path d="M1.2 3.3L4 1V5.6ZM12.8 3.3L10 1V5.6Z" fill="#5f5f5f"/></svg>
<span class="t" style="top:299.67px;font-size:12.5px;line-height:16px;color:#5e5e5e;left:221.00px;width:26.00px;text-align:center;">1</span>
<span class="t h" style="top:300.02px;font-size:11.5px;line-height:15px;color:#c39d2c;letter-spacing:-0.253px;transform:scaleX(0.9282);transform-origin:0 50%;left:252.50px;">Record</span>
<span class="t" style="top:300.02px;font-size:11.5px;line-height:15px;color:#222;font-style:italic;right:614.70px;">0</span>
<span class="t" style="top:300.02px;font-size:11.5px;line-height:15px;color:#222;font-style:italic;right:454.70px;">0</span>
<span class="t h" style="top:300.02px;font-size:11.5px;line-height:15px;color:#c39d2c;letter-spacing:-0.253px;transform:scaleX(0.9282);transform-origin:0 50%;left:732.00px;">Record</span>
<span class="t" style="top:320.67px;font-size:12.5px;line-height:16px;color:#5e5e5e;left:221.00px;width:26.00px;text-align:center;">2</span>
<span class="t h" style="top:321.02px;font-size:11.5px;line-height:15px;color:#c39d2c;letter-spacing:-0.253px;transform:scaleX(0.9282);transform-origin:0 50%;left:252.50px;">Record</span>
<span class="t" style="top:321.02px;font-size:11.5px;line-height:15px;color:#222;font-style:italic;right:614.70px;">1</span>
<span class="t" style="top:321.02px;font-size:11.5px;line-height:15px;color:#222;font-style:italic;right:454.70px;">1</span>
<span class="t h" style="top:321.02px;font-size:11.5px;line-height:15px;color:#c39d2c;letter-spacing:-0.253px;transform:scaleX(0.9282);transform-origin:0 50%;left:732.00px;">Record</span>
<span class="t" style="top:341.67px;font-size:12.5px;line-height:16px;color:#5e5e5e;left:221.00px;width:26.00px;text-align:center;">3</span>
<span class="t h" style="top:342.02px;font-size:11.5px;line-height:15px;color:#c39d2c;letter-spacing:-0.253px;transform:scaleX(0.9282);transform-origin:0 50%;left:252.50px;">Record</span>
<span class="t" style="top:342.02px;font-size:11.5px;line-height:15px;color:#222;font-style:italic;right:614.70px;">1</span>
<span class="t" style="top:342.02px;font-size:11.5px;line-height:15px;color:#222;font-style:italic;right:454.70px;">10</span>
<span class="t h" style="top:342.02px;font-size:11.5px;line-height:15px;color:#c39d2c;letter-spacing:-0.253px;transform:scaleX(0.9282);transform-origin:0 50%;left:732.00px;">Record</span>
<span class="t" style="top:362.67px;font-size:12.5px;line-height:16px;color:#5e5e5e;left:221.00px;width:26.00px;text-align:center;">4</span>
<span class="t h" style="top:363.02px;font-size:11.5px;line-height:15px;color:#c39d2c;letter-spacing:-0.253px;transform:scaleX(0.9282);transform-origin:0 50%;left:252.50px;">Record</span>
<span class="t" style="top:363.02px;font-size:11.5px;line-height:15px;color:#222;font-style:italic;right:614.70px;">1</span>
<span class="t" style="top:363.02px;font-size:11.5px;line-height:15px;color:#222;font-style:italic;right:454.70px;">4</span>
<span class="t h" style="top:363.02px;font-size:11.5px;line-height:15px;color:#c39d2c;letter-spacing:-0.253px;transform:scaleX(0.9282);transform-origin:0 50%;left:732.00px;">Record</span>
<span class="t" style="top:383.67px;font-size:12.5px;line-height:16px;color:#5e5e5e;left:221.00px;width:26.00px;text-align:center;">5</span>
<span class="t h" style="top:384.02px;font-size:11.5px;line-height:15px;color:#c39d2c;letter-spacing:-0.253px;transform:scaleX(0.9282);transform-origin:0 50%;left:252.50px;">Record</span>
<span class="t" style="top:384.02px;font-size:11.5px;line-height:15px;color:#222;font-style:italic;right:614.70px;">5</span>
<span class="t" style="top:384.02px;font-size:11.5px;line-height:15px;color:#222;font-style:italic;right:454.70px;">1</span>
<span class="t h" style="top:384.02px;font-size:11.5px;line-height:15px;color:#c39d2c;letter-spacing:-0.253px;transform:scaleX(0.9282);transform-origin:0 50%;left:732.00px;">Record</span>
<span class="t" style="top:404.67px;font-size:12.5px;line-height:16px;color:#5e5e5e;left:221.00px;width:26.00px;text-align:center;">6</span>
<span class="t h" style="top:405.02px;font-size:11.5px;line-height:15px;color:#c39d2c;letter-spacing:-0.253px;transform:scaleX(0.9282);transform-origin:0 50%;left:252.50px;">Record</span>
<span class="t" style="top:405.02px;font-size:11.5px;line-height:15px;color:#222;font-style:italic;right:614.70px;">1</span>
<span class="t" style="top:405.02px;font-size:11.5px;line-height:15px;color:#222;font-style:italic;right:454.70px;">1</span>
<span class="t h" style="top:405.02px;font-size:11.5px;line-height:15px;color:#c39d2c;letter-spacing:-0.253px;transform:scaleX(0.9282);transform-origin:0 50%;left:732.00px;">Record</span>
<span class="t" style="top:425.67px;font-size:12.5px;line-height:16px;color:#5e5e5e;left:221.00px;width:26.00px;text-align:center;">7</span>
<span class="t h" style="top:426.02px;font-size:11.5px;line-height:15px;color:#c39d2c;letter-spacing:-0.253px;transform:scaleX(0.9282);transform-origin:0 50%;left:252.50px;">Record</span>
<span class="t" style="top:426.02px;font-size:11.5px;line-height:15px;color:#222;font-style:italic;right:614.70px;">6</span>
<span class="t" style="top:426.02px;font-size:11.5px;line-height:15px;color:#222;font-style:italic;right:454.70px;">1</span>
<span class="t h" style="top:426.02px;font-size:11.5px;line-height:15px;color:#c39d2c;letter-spacing:-0.253px;transform:scaleX(0.9282);transform-origin:0 50%;left:732.00px;">Record</span>
<span class="t" style="top:446.67px;font-size:12.5px;line-height:16px;color:#5e5e5e;left:221.00px;width:26.00px;text-align:center;">8</span>
<span class="t h" style="top:447.02px;font-size:11.5px;line-height:15px;color:#c39d2c;letter-spacing:-0.253px;transform:scaleX(0.9282);transform-origin:0 50%;left:252.50px;">Record</span>
<span class="t" style="top:447.02px;font-size:11.5px;line-height:15px;color:#222;font-style:italic;right:614.70px;">1</span>
<span class="t" style="top:447.02px;font-size:11.5px;line-height:15px;color:#222;font-style:italic;right:454.70px;">1</span>
<span class="t h" style="top:447.02px;font-size:11.5px;line-height:15px;color:#c39d2c;letter-spacing:-0.253px;transform:scaleX(0.9282);transform-origin:0 50%;left:732.00px;">Record</span>
<span class="t" style="top:467.67px;font-size:12.5px;line-height:16px;color:#5e5e5e;left:221.00px;width:26.00px;text-align:center;">9</span>
<span class="t h" style="top:468.02px;font-size:11.5px;line-height:15px;color:#c39d2c;letter-spacing:-0.253px;transform:scaleX(0.9282);transform-origin:0 50%;left:252.50px;">Record</span>
<span class="t" style="top:468.02px;font-size:11.5px;line-height:15px;color:#222;font-style:italic;right:614.70px;">7</span>
<span class="t" style="top:468.02px;font-size:11.5px;line-height:15px;color:#222;font-style:italic;right:454.70px;">1</span>
<span class="t h" style="top:468.02px;font-size:11.5px;line-height:15px;color:#c39d2c;letter-spacing:-0.253px;transform:scaleX(0.9282);transform-origin:0 50%;left:732.00px;">Record</span>
<span class="t" style="top:488.67px;font-size:12.5px;line-height:16px;color:#5e5e5e;left:221.00px;width:26.00px;text-align:center;">10</span>
<span class="t h" style="top:489.02px;font-size:11.5px;line-height:15px;color:#c39d2c;letter-spacing:-0.253px;transform:scaleX(0.9282);transform-origin:0 50%;left:252.50px;">Record</span>
<span class="t" style="top:489.02px;font-size:11.5px;line-height:15px;color:#222;font-style:italic;right:614.70px;">1</span>
<span class="t" style="top:489.02px;font-size:11.5px;line-height:15px;color:#222;font-style:italic;right:454.70px;">1</span>
<span class="t h" style="top:489.02px;font-size:11.5px;line-height:15px;color:#c39d2c;letter-spacing:-0.253px;transform:scaleX(0.9282);transform-origin:0 50%;left:732.00px;">Record</span>
<span class="t" style="top:509.67px;font-size:12.5px;line-height:16px;color:#5e5e5e;left:221.00px;width:26.00px;text-align:center;">11</span>
<span class="t h" style="top:510.02px;font-size:11.5px;line-height:15px;color:#c39d2c;letter-spacing:-0.253px;transform:scaleX(0.9282);transform-origin:0 50%;left:252.50px;">Record</span>
<span class="t" style="top:510.02px;font-size:11.5px;line-height:15px;color:#222;font-style:italic;right:614.70px;">8</span>
<span class="t" style="top:510.02px;font-size:11.5px;line-height:15px;color:#222;font-style:italic;right:454.70px;">1</span>
<span class="t h" style="top:510.02px;font-size:11.5px;line-height:15px;color:#c39d2c;letter-spacing:-0.253px;transform:scaleX(0.9282);transform-origin:0 50%;left:732.00px;">Record</span>
<span class="t" style="top:530.67px;font-size:12.5px;line-height:16px;color:#5e5e5e;left:221.00px;width:26.00px;text-align:center;">12</span>
<span class="t h" style="top:531.02px;font-size:11.5px;line-height:15px;color:#c39d2c;letter-spacing:-0.253px;transform:scaleX(0.9282);transform-origin:0 50%;left:252.50px;">Record</span>
<span class="t" style="top:531.02px;font-size:11.5px;line-height:15px;color:#222;font-style:italic;right:614.70px;">1</span>
<span class="t" style="top:531.02px;font-size:11.5px;line-height:15px;color:#222;font-style:italic;right:454.70px;">1</span>
<span class="t h" style="top:531.02px;font-size:11.5px;line-height:15px;color:#c39d2c;letter-spacing:-0.253px;transform:scaleX(0.9282);transform-origin:0 50%;left:732.00px;">Record</span>
<div class="a" style="left:383px;top:187px;width:28px;height:26px;border:3px solid #ee1c25;"></div>
<svg class="a" style="left:384px;top:215px" width="24" height="72" viewBox="0 0 24 72"><path d="M12 4L3.8 35H7.8V68H16.5V35H20.2Z" fill="none" stroke="#ee1c25" stroke-width="2.8" stroke-linejoin="round"/></svg>
<div class="a" style="left:889px;top:295px;width:20px;height:258px;background:#f0f0f0;"></div>
<svg class="a" style="left:895px;top:314px" width="12" height="9" viewBox="0 0 12 9"><path d="M1 7.5L6 2.2L11 7.5" fill="none" stroke="#4f4f4f" stroke-width="2.4"/></svg>
<div class="a" style="left:893px;top:331px;width:15px;height:44px;background:#c8c8c8;"></div>
<svg class="a" style="left:895px;top:526px" width="12" height="9" viewBox="0 0 12 9"><path d="M1 1.5L6 6.8L11 1.5" fill="none" stroke="#4f4f4f" stroke-width="2.4"/></svg>
<div class="a" style="left:913px;top:147px;width:1px;height:406px;background:#c8c6c4;"></div>
<span class="t" style="top:156.35px;font-size:14px;line-height:18px;color:#555;letter-spacing:-0.308px;transform:scaleX(0.9271);transform-origin:0 50%;left:925.00px;">Kyselyasetukset</span>
<svg class="a" style="left:1141px;top:159px" width="13" height="13" viewBox="0 0 13 13"><path d="M1 1L12 12M12 1L1 12" stroke="#555" stroke-width="1.2" fill="none"/></svg>
<svg class="a" style="left:925px;top:194px" width="7" height="7" viewBox="0 0 7 7"><path d="M6.5 0.5V6.5H0.5Z" fill="#555"/></svg>
<span class="t" style="top:189.67px;font-size:12.5px;line-height:16px;color:#252423;font-weight:700;letter-spacing:-0.275px;transform:scaleX(0.9922);transform-origin:0 50%;left:937.00px;">OMINAISUUDET</span>
<span class="t" style="top:209.00px;font-size:13px;line-height:17px;color:#333;letter-spacing:-0.286px;transform:scaleX(0.9658);transform-origin:0 50%;left:937.50px;">Nimi</span>
<div class="a" style="left:937px;top:227px;width:218px;height:22px;background:#fff;border:1px solid #c8c6c4;"></div>
<span class="t" style="top:230.84px;font-size:12px;line-height:16px;color:#333;letter-spacing:-0.264px;transform:scaleX(0.9551);transform-origin:0 50%;left:943.50px;">Get BOM</span>
<span class="t" style="top:256.00px;font-size:13px;line-height:17px;color:#1a6fc4;letter-spacing:-0.286px;transform:scaleX(0.9575);transform-origin:0 50%;left:937.50px;">Kaikki ominaisuudet</span>
<svg class="a" style="left:925px;top:295px" width="7" height="7" viewBox="0 0 7 7"><path d="M6.5 0.5V6.5H0.5Z" fill="#555"/></svg>
<span class="t" style="top:291.17px;font-size:12.5px;line-height:16px;color:#252423;font-weight:700;letter-spacing:-0.275px;transform:scaleX(0.9439);transform-origin:0 50%;left:937.00px;">KÄYTÖSSÄ OLEVAT VAIHEET</span>
<div class="a" style="left:937px;top:312px;width:218px;height:216px;background:#f3f2f1;border:1px solid #c8c6c4;"></div>
<div class="a" style="left:938px;top:353px;width:216px;height:20px;background:#d2d0ce;"></div>
<div class="a" style="left:938px;top:353px;width:2.5px;height:20px;background:#f2c811;"></div>
<span class="t" style="top:315.67px;font-size:12.5px;line-height:16px;color:#252423;letter-spacing:-0.275px;transform:scaleX(0.9436);transform-origin:0 50%;left:960.50px;">Lähde</span>
<span class="t" style="top:335.67px;font-size:12.5px;line-height:16px;color:#252423;letter-spacing:-0.275px;transform:scaleX(0.9949);transform-origin:0 50%;left:960.50px;">Siirtyminen</span>
<span class="t" style="top:355.67px;font-size:12.5px;line-height:16px;color:#252423;letter-spacing:-0.189px;left:960.50px;">Käynnistetty funktioprojects/...</span>
<svg class="a" style="left:945px;top:358px" width="11" height="10" viewBox="0 0 11 10"><path d="M0.8 0.8L10.2 9.2M10.2 0.8L0.8 9.2" stroke="#555" stroke-width="1.2" fill="none"/></svg>
<svg class="a" style="left:1135px;top:318px" width="11" height="11" viewBox="0 0 11 11"><g transform="translate(5.5,5.2)" stroke="#a9a8a7" stroke-width="1.9" fill="none"><path d="M-5.5 0H5.5" transform="rotate(0)"/><path d="M-5.5 0H5.5" transform="rotate(60)"/><path d="M-5.5 0H5.5" transform="rotate(120)"/></g><circle cx="5.5" cy="5.2" r="2.5" fill="#f3f2f1" stroke="#a9a8a7" stroke-width="1.5"/></svg>
<svg class="a" style="left:1135px;top:338px" width="11" height="11" viewBox="0 0 11 11"><g transform="translate(5.5,5.2)" stroke="#a9a8a7" stroke-width="1.9" fill="none"><path d="M-5.5 0H5.5" transform="rotate(0)"/><path d="M-5.5 0H5.5" transform="rotate(60)"/><path d="M-5.5 0H5.5" transform="rotate(120)"/></g><circle cx="5.5" cy="5.2" r="2.5" fill="#f3f2f1" stroke="#a9a8a7" stroke-width="1.5"/></svg>
<svg class="a" style="left:1135px;top:358px" width="11" height="11" viewBox="0 0 11 11"><g transform="translate(5.5,5.2)" stroke="#b4b2b0" stroke-width="1.9" fill="none"><path d="M-5.5 0H5.5" transform="rotate(0)"/><path d="M-5.5 0H5.5" transform="rotate(60)"/><path d="M-5.5 0H5.5" transform="rotate(120)"/></g><circle cx="5.5" cy="5.2" r="2.5" fill="#d2d0ce" stroke="#b4b2b0" stroke-width="1.5"/></svg>
<span class="t" style="top:558.02px;font-size:11.5px;line-height:15px;color:#444;letter-spacing:-0.253px;transform:scaleX(0.9052);transform-origin:0 50%;left:6.00px;">4 SARAKETTA, 481 RIVIÄ</span>
<span class="t" style="top:558.02px;font-size:11.5px;line-height:15px;color:#444;letter-spacing:-0.182px;left:140.00px;">Sarakkeen profilointi perustuu ylimpiin 1000 riviin</span>
</body></html>
